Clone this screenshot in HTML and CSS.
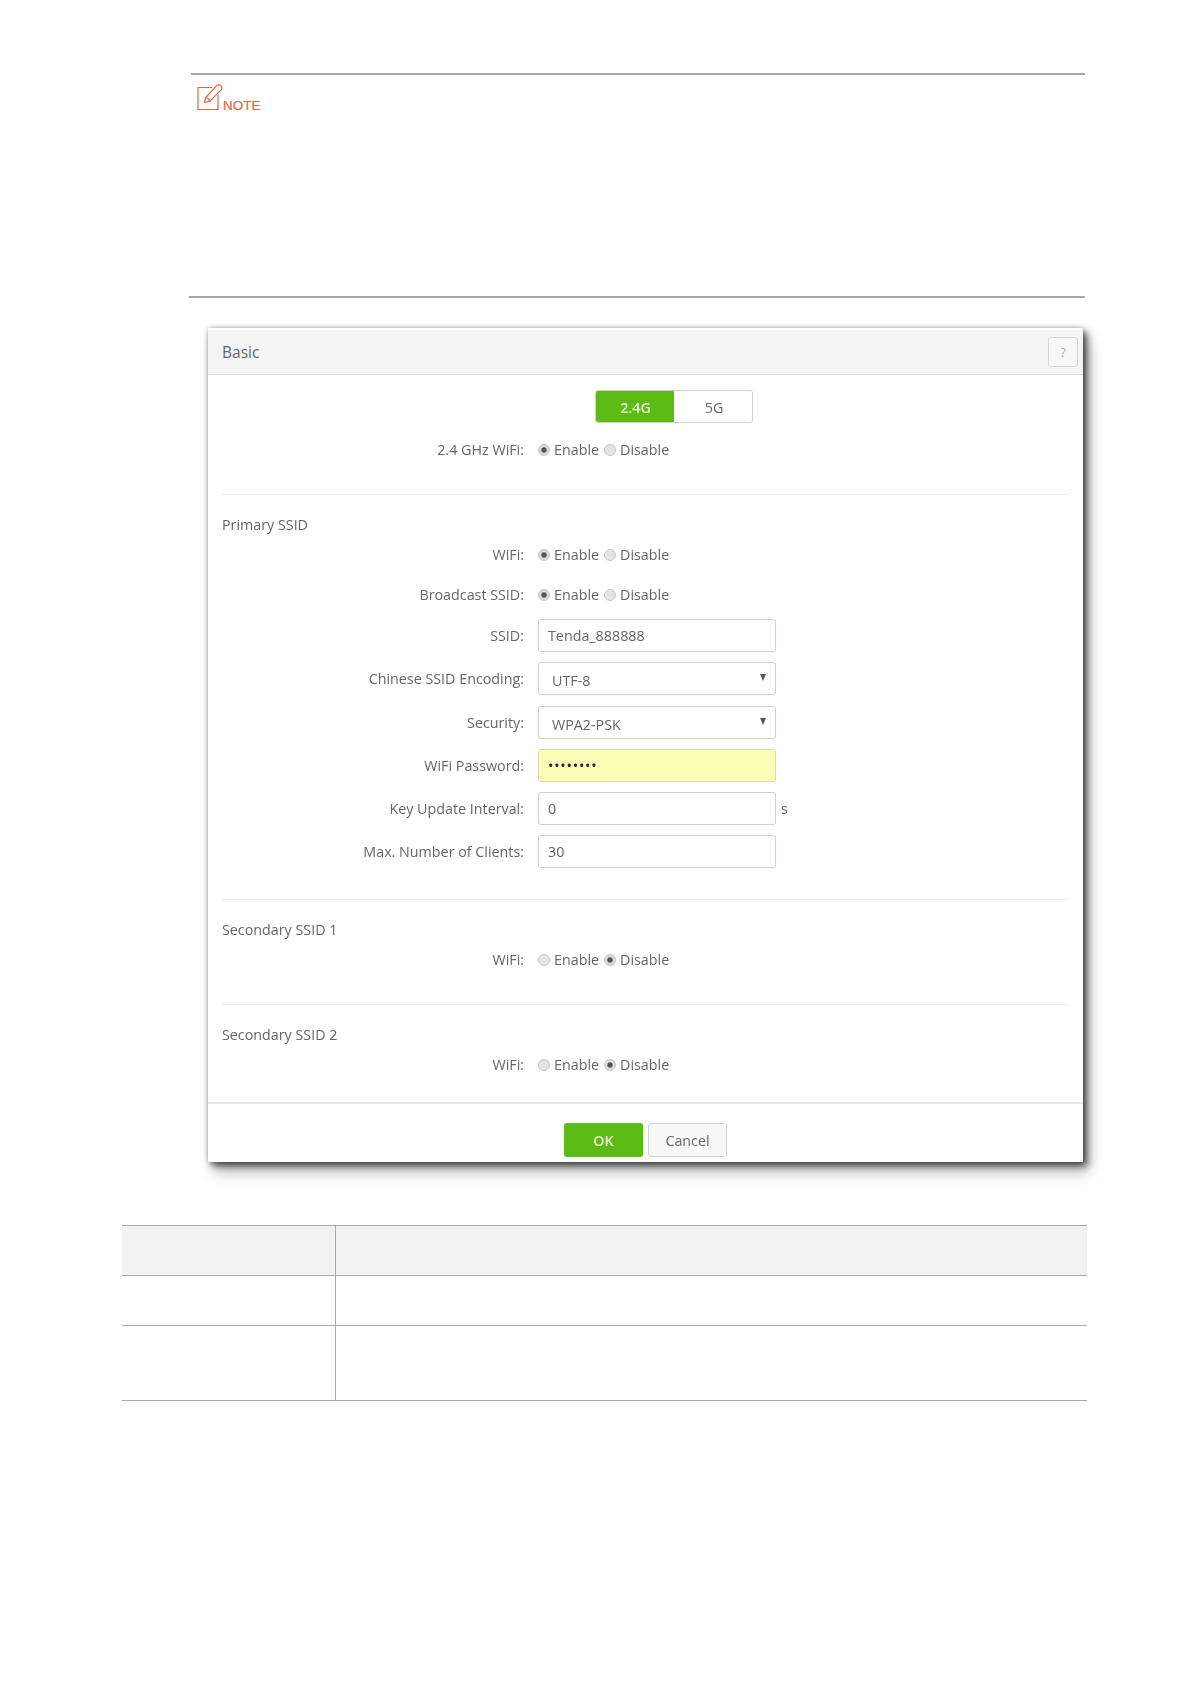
FILE: index.html
```html
<!DOCTYPE html>
<html lang="en">
<head>
<meta charset="utf-8">
<title>Basic WiFi settings</title>
<link rel="stylesheet" href="styles.css">
</head>
<body>
<main class="page">
  <section class="note">
    <div class="note-head">
      <svg class="note-icon" viewBox="0 0 26 27" width="26" height="27" aria-hidden="true">
        <path d="M15 3.5H1v22h20V11" fill="none" stroke="#e2673c" stroke-width="1.2"/>
        <path d="M7.5 18.5l1.2-5L19.5 1.8c1.2-1.2 3.6-1.1 4.6.1 1 1.200.9 3-.2 4.200L13 17.200z" fill="none" stroke="#e2673c" stroke-width="1.200" stroke-linejoin="round"/>
        <path d="M8.700 13.500c1.600.2 3.400 1.800 4.300 3.700" fill="none" stroke="#e2673c" stroke-width="1.200"/>
      </svg>
      <span class="note-label">NOTE</span>
    </div>
  </section>

  <section class="dialog">
    <header class="dialog-head">
      <h2 class="dialog-title">Basic</h2>
      <button class="help" type="button">?</button>
    </header>

    <div class="dialog-body">
      <div class="segment">
        <span class="seg seg-on">2.4G</span>
        <span class="seg">5G</span>
      </div>
      <div class="row row-first">
        <span class="label">2.4 GHz WiFi:</span>
        <div class="radios">
          <label class="radio"><input type="radio" name="r0" checked>Enable</label>
          <label class="radio"><input type="radio" name="r0">Disable</label>
        </div>
      </div>
      <hr class="rule rule-a">

      <h3 class="section-title">Primary SSID</h3>
      <div class="row row-wifi">
        <span class="label">WiFi:</span>
        <div class="radios">
          <label class="radio"><input type="radio" name="r1" checked>Enable</label>
          <label class="radio"><input type="radio" name="r1">Disable</label>
        </div>
      </div>
      <div class="row row-broadcast">
        <span class="label">Broadcast SSID:</span>
        <div class="radios">
          <label class="radio"><input type="radio" name="r2" checked>Enable</label>
          <label class="radio"><input type="radio" name="r2">Disable</label>
        </div>
      </div>

      <div class="fields">
        <div class="field">
          <span class="label">SSID:</span>
          <input class="control" type="text" value="Tenda_888888">
        </div>
        <div class="field field-select">
          <span class="label">Chinese SSID Encoding:</span>
          <select class="control control-select"><option>UTF-8</option></select>
        </div>
        <div class="field field-select">
          <span class="label">Security:</span>
          <select class="control control-select"><option>WPA2-PSK</option></select>
        </div>
        <div class="field">
          <span class="label">WiFi Password:</span>
          <input class="control control-pass" type="password" value="12345678">
        </div>
        <div class="field">
          <span class="label">Key Update Interval:</span>
          <input class="control" type="text" value="0">
          <span class="unit">s</span>
        </div>
        <div class="field">
          <span class="label">Max. Number of Clients:</span>
          <input class="control" type="text" value="30">
        </div>
      </div>
      <hr class="rule rule-b">

      <h3 class="section-title">Secondary SSID 1</h3>
      <div class="row row-wifi">
        <span class="label">WiFi:</span>
        <div class="radios">
          <label class="radio"><input type="radio" name="r3">Enable</label>
          <label class="radio"><input type="radio" name="r3" checked>Disable</label>
        </div>
      </div>
      <hr class="rule rule-a">

      <h3 class="section-title">Secondary SSID 2</h3>
      <div class="row row-wifi">
        <span class="label">WiFi:</span>
        <div class="radios">
          <label class="radio"><input type="radio" name="r4">Enable</label>
          <label class="radio"><input type="radio" name="r4" checked>Disable</label>
        </div>
      </div>
    </div>

    <footer class="dialog-foot">
      <button class="btn btn-ok" type="button">OK</button>
      <button class="btn btn-cancel" type="button">Cancel</button>
    </footer>
  </section>

  <table class="params">
    <tr class="params-head"><th></th><th></th></tr>
    <tr class="params-short"><td></td><td></td></tr>
    <tr class="params-tall"><td></td><td></td></tr>
  </table>
</main>
</body>
</html>
```
FILE: styles.css
```css
* { box-sizing: border-box; }

html, body { margin: 0; background: #fff; }

body {
  font-family: "Open Sans", "Noto Sans", sans-serif;
  font-size: 14.3px;
  color: #666;
}

.page {
  width: 1191px;
  height: 1684px;
  padding-top: 73px;
  overflow: hidden;
}

/* Note block */
.note {
  width: 896px;
  height: 225px;
  margin-left: 189px;
  border-bottom: 2px solid #a6a6a6;
  position: relative;
  background: linear-gradient(#a6a6a6, #a6a6a6) 2px 0 / 894px 2px no-repeat;
}

.note-head {
  display: flex;
  align-items: flex-end;
  padding: 11px 0 0 8px;
}

.note-icon { display: block; }

.note-label {
  font-family: "Liberation Sans", Arial, sans-serif;
  font-size: 13.5px;
  line-height: 12px;
  color: #e2673c;
  margin-bottom: -1px;
  -webkit-text-stroke: .2px #e2673c;
}

/* Dialog */
.dialog {
  width: 875px;
  height: 834px;
  margin: 30px 0 0 208px;
  background: #fff;
  display: flex;
  flex-direction: column;
  box-shadow: 4px 4px 7px rgba(0, 0, 0, .6), 6px 10px 14px rgba(0, 0, 0, .28), 0 0 5px rgba(0, 0, 0, .3);
  filter: blur(.35px);
}

.dialog-head {
  height: 47px;
  border-top: 2px solid #fff;
  border-bottom: 1px solid #dcdcdc;
  background: #f5f5f5;
  display: flex;
  align-items: center;
  justify-content: space-between;
  padding: 0 5px 0 14px;
}

.dialog-title {
  margin: 0;
  font-size: 15.5px;
  font-weight: 400;
  color: #666;
}

.help {
  width: 30px;
  height: 30px;
  padding: 0;
  border: 1px solid #d4d4d4;
  border-radius: 3px;
  background: #f7f7f7;
  font: 12px "Open Sans", sans-serif;
  color: #aaa;
}

.dialog-body {
  flex: 1;
  padding: 15px 14px 0;
}

.segment {
  display: flex;
  width: 158px;
  height: 33px;
  margin-left: 373px;
  border: 1px solid #d0d0d0;
  border-radius: 3px;
  overflow: hidden;
}

.seg {
  flex: 1;
  display: flex;
  align-items: center;
  justify-content: center;
  padding: 2px 0 0 2px;
  color: #666;
}

.seg-on {
  flex: 0 0 79px;
  margin: -1px 0 -1px -1px;
  background: #5cbb15;
  color: #e6f7d0;
  font-weight: 600;
}

.row, .field {
  display: flex;
  align-items: center;
}

.row { height: 20px; }
.row-first { margin-top: 16px; }
.row-wifi { margin-top: 9px; }
.row-broadcast { margin-top: 20px; }

.label {
  flex: 0 0 302px;
  margin-right: 14px;
  text-align: right;
  white-space: nowrap;
}

.radios { display: flex; gap: 5px; }

.radio {
  display: flex;
  align-items: center;
  gap: 4px;
}

.radio input {
  appearance: none;
  width: 12px;
  height: 12px;
  margin: 2px 0 1px;
  border: 1px solid #c4c4c4;
  border-radius: 50%;
  background: #e4e4e4;
}

.radio input:checked {
  background: radial-gradient(circle, #555 0 2.2px, #dcdcdc 3.2px);
}

.rule {
  height: 1px;
  margin: 0;
  border: 0;
  background: #ececec;
}

.rule-a { margin-top: 35px; }
.rule-b { margin-top: 31px; }

.section-title {
  height: 20px;
  margin: 20px 0 0;
  font-size: 14.3px;
  font-weight: 400;
  line-height: 20px;
  color: #666;
}

.fields {
  display: flex;
  flex-direction: column;
  gap: 10.3px;
  margin-top: 15px;
}

.field { position: relative; }

.control {
  width: 238px;
  height: 33px;
  padding: 0 9px;
  border: 1px solid #d0d0d0;
  border-radius: 3px;
  background: #fff;
  font: inherit;
  color: #666;
  box-shadow: 0 0 1px rgba(0, 0, 0, .08);
}

.control-select {
  appearance: none;
  padding: 4px 13px 0;
}

.field-select::after {
  content: "";
  position: absolute;
  left: 538px;
  top: 12px;
  border-left: 3.5px solid transparent;
  border-right: 3.5px solid transparent;
  border-top: 7px solid #555;
  pointer-events: none;
}

.control-pass {
  background: #fafdb6;
  border-color: #dcdcb0;
  color: #222;
  padding-top: 1px;
  letter-spacing: .8px;
}

.unit { margin-left: 5px; }

.dialog-foot {
  height: 60px;
  border-top: 2px solid #e8e8e8;
  display: flex;
  gap: 5px;
  padding: 19px 0 0 356px;
}

.btn {
  height: 34px;
  padding: 0;
  border-radius: 3px;
  font: inherit;
}

.btn-ok {
  width: 79px;
  border: 0;
  background: #5cbb15;
  color: #e6f7d0;
  font-weight: 600;
}

.btn-cancel {
  width: 79px;
  border: 1px solid #d4d4d4;
  background: #f8f8f8;
  color: #666;
}

/* Parameter table */
.params {
  width: 965px;
  margin: 63px 0 0 122px;
  border-collapse: collapse;
  table-layout: fixed;
}

.params th, .params td {
  padding: 0;
  border-top: 1px solid #aaa;
  border-bottom: 1px solid #aaa;
}

.params th:first-child, .params td:first-child {
  width: 213px;
  border-right: 1px solid #aaa;
}

.params-head { height: 50px; }
.params-head th { background: #f2f2f2; }
.params-short { height: 50px; }
.params-tall { height: 75px; }
```
